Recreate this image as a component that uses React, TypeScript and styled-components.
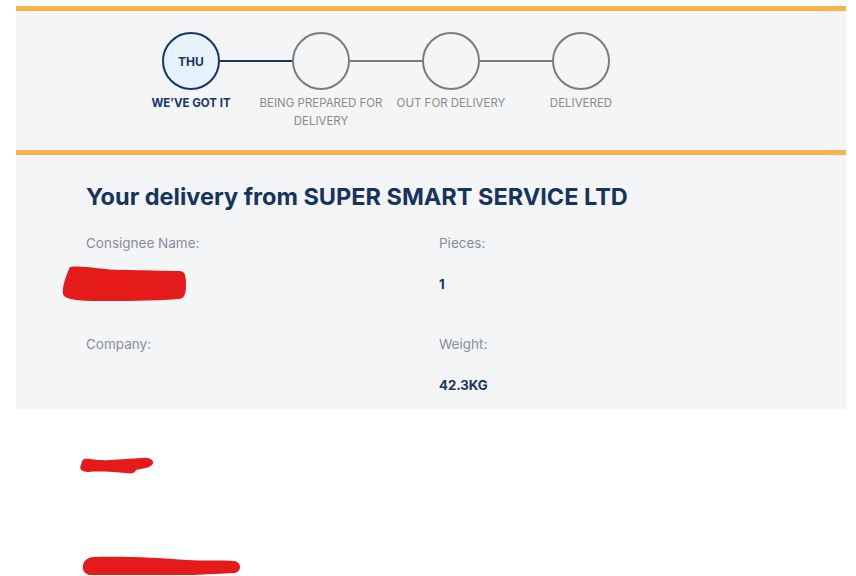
import React from "react";
import styled, { createGlobalStyle } from "styled-components";

const Global = createGlobalStyle`
  html, body { margin: 0; padding: 0; background: #ffffff; }
  body { font-family: Inter, "Liberation Sans", sans-serif; }
`;

const Page = styled.div`
  width: 830px;
  margin-left: 16px;
  padding-top: 6px;
`;

const StepsBar = styled.section`
  background: #f4f5f7;
  border-top: 5px solid #f5b54a;
  border-bottom: 5px solid #f5b54a;
  padding: 21px 0 20px 110px;
  display: flex;
`;

const Step = styled.div`
  width: 130px;
  display: flex;
  flex-direction: column;
  align-items: center;
  position: relative;
`;

const Connector = styled.div<{ $done: boolean }>`
  position: absolute;
  top: 28px;
  left: 94px;
  width: 72px;
  height: 2px;
  background: ${(p) => (p.$done ? "#16356a" : "#7c7c7c")};
`;

const Circle = styled.div<{ $active: boolean }>`
  width: 58px;
  height: 58px;
  box-sizing: border-box;
  border-radius: 50%;
  border: 2px solid ${(p) => (p.$active ? "#16356a" : "#7c7c7c")};
  background: ${(p) => (p.$active ? "#e6f3fd" : "transparent")};
  display: flex;
  align-items: center;
  justify-content: center;
  font-size: 12px;
  font-weight: 700;
  color: #16356a;
`;

const StepLabel = styled.div<{ $active: boolean }>`
  margin-top: 4px;
  font-size: 11.5px;
  line-height: 18px;
  text-align: center;
  color: ${(p) => (p.$active ? "#16356a" : "#8a8a8a")};
  font-weight: ${(p) => (p.$active ? 700 : 400)};
  width: 130px;
`;

const Info = styled.section`
  background: #f4f5f7;
  padding: 27px 0 14px 70px;
`;

const Heading = styled.h1`
  margin: 0;
  font-size: 23.5px;
  line-height: 30px;
  font-weight: 700;
  color: #17345f;
`;

const Fields = styled.div`
  margin-top: 21px;
  display: grid;
  grid-template-columns: 353px 1fr;
  row-gap: 40px;
`;

const Field = styled.div`
  display: flex;
  flex-direction: column;
`;

const Label = styled.div`
  font-size: 13.5px;
  line-height: 20px;
  color: #878d97;
`;

const Value = styled.div`
  margin-top: 21px;
  font-size: 13.2px;
  line-height: 20px;
  font-weight: 700;
  color: #17345f;
  min-height: 20px;
  position: relative;
`;

const Scribble = styled.svg`
  position: absolute;
  overflow: visible;
`;

const Below = styled.section`
  padding: 46px 0 0 64px;
  display: flex;
  flex-direction: column;
  gap: 80px;
`;

const RedactedLine = styled.div`
  position: relative;
  height: 20px;
`;

const steps = [
  { label: "WE\u2019VE GOT IT", day: "THU", active: true },
  { label: "BEING PREPARED FOR DELIVERY", day: "", active: false },
  { label: "OUT FOR DELIVERY", day: "", active: false },
  { label: "DELIVERED", day: "", active: false },
];

export default function App() {
  return (
    <Page>
      <Global />
      <StepsBar>
        {steps.map((s, i) => (
          <Step key={s.label}>
            {i < steps.length - 1 && <Connector $done={i === 0} />}
            <Circle $active={s.active}>{s.day}</Circle>
            <StepLabel $active={s.active}>{s.label}</StepLabel>
          </Step>
        ))}
      </StepsBar>
      <Info>
        <Heading>Your delivery from SUPER SMART SERVICE LTD</Heading>
        <Fields>
          <Field>
            <Label>Consignee Name:</Label>
            <Value>
              <Scribble width="124" height="38" style={{ left: -24, top: -9 }} viewBox="0 0 124 38">
                <path
                  d="M8 2 C20 0 40 5 60 5 C80 5 100 6 117 6 C123 6 124 10 124 20 C124 30 122 34 116 34 C90 36 60 36 35 36 C20 36 6 35 2 31 C-1 27 2 15 8 2 Z"
                  fill="#e51b1b"
                />
              </Scribble>
            </Value>
          </Field>
          <Field>
            <Label>Pieces:</Label>
            <Value>1</Value>
          </Field>
          <Field>
            <Label>Company:</Label>
            <Value />
          </Field>
          <Field>
            <Label>Weight:</Label>
            <Value>42.3KG</Value>
          </Field>
        </Fields>
      </Info>
      <Below>
        <RedactedLine>
          <Scribble width="74" height="17" style={{ left: 0, top: 2 }} viewBox="0 0 74 17">
            <path
              d="M4 2 C10 1 16 4 30 3 C42 2 50 2 62 1 C72 0 75 5 72 8 C69 11 60 12 56 13 C55 16 52 17 46 16 C34 15 20 14 8 15 C1 15 -1 11 1 8 C2 5 2 3 4 2 Z"
              fill="#e51b1b"
            />
          </Scribble>
        </RedactedLine>
        <RedactedLine>
          <Scribble width="160" height="23" style={{ left: 2, top: 1 }} viewBox="0 0 160 23">
            <path
              d="M12 1 C40 0 80 2 105 4 C120 5 140 4 152 5 C160 6 160 16 152 17 C140 18 125 18 110 19 C90 20 60 23 30 22 C15 22 2 20 1 13 C0 6 5 1 12 1 Z"
              fill="#e51b1b"
            />
          </Scribble>
        </RedactedLine>
      </Below>
    </Page>
  );
}
